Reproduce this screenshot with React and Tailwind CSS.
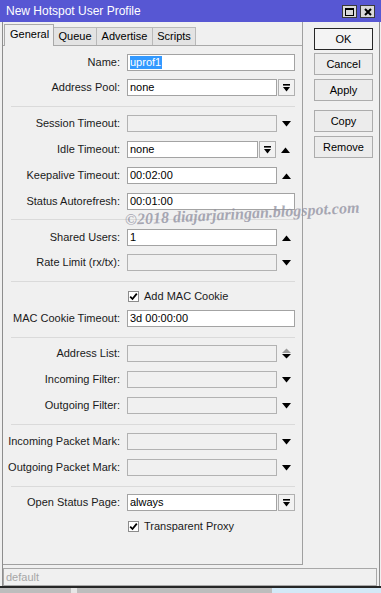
import React from 'react';

const DropIcon = () => (
  <svg width="7" height="8" viewBox="0 0 7 8">
    <rect x="0" y="0" width="7" height="1.6" fill="#000" />
    <polygon points="0,3 7,3 3.5,7.5" fill="#000" />
  </svg>
);

const Arrow = ({ dir }) => {
  if (dir === 'up')
    return (
      <svg width="9" height="6" viewBox="0 0 9 6">
        <polygon points="0,6 9,6 4.5,0.5" fill="#000" />
      </svg>
    );
  if (dir === 'down')
    return (
      <svg width="9" height="6" viewBox="0 0 9 6">
        <polygon points="0,0 9,0 4.5,5.5" fill="#000" />
      </svg>
    );
  // up + down stacked, up one disabled
  return (
    <svg width="9" height="11" viewBox="0 0 9 11">
      <polygon points="0,5 9,5 4.5,0.5" fill="#9a9a9a" />
      <polygon points="0,6 9,6 4.5,10.5" fill="#000" />
    </svg>
  );
};

const Input = ({ value, disabled, className = '' }) => (
  <div
    className={`h-[17px] border flex items-center px-[2px] text-[11px] text-black leading-none ${
      disabled ? 'bg-[#f0f0f0] border-[#b2b2b2]' : 'bg-white border-[#a3a3a3]'
    } ${className}`}
  >
    {value}
  </div>
);

const DropBtn = () => (
  <div className="ml-[1px] w-[17px] h-[17px] border border-[#b0b0b0] bg-[#f2f2f2] flex items-center justify-center">
    <DropIcon />
  </div>
);

const Row = ({ label, value, kind = 'full', arrow, disabled, mt }) => (
  <div className={`flex items-center h-[17px] ${mt}`}>
    <div className="w-[117px] text-right text-[11px] text-[#1a1a1a] whitespace-nowrap">{label}</div>
    <div className="ml-[7px] w-[168px] flex items-center">
      {kind === 'full' && <Input value={value} disabled={disabled} className="w-full" />}
      {kind === 'drop' && (
        <>
          <Input value={value} disabled={disabled} className="w-[150px]" />
          <DropBtn />
        </>
      )}
      {kind === 'arrow' && (
        <>
          <Input value={value} disabled={disabled} className="w-[150px]" />
          <div className="flex-1 flex justify-center">
            <Arrow dir={arrow} />
          </div>
        </>
      )}
      {kind === 'dropArrow' && (
        <>
          <Input value={value} disabled={disabled} className="w-[131px]" />
          <DropBtn />
          <div className="flex-1 flex justify-center">
            <Arrow dir={arrow} />
          </div>
        </>
      )}
    </div>
  </div>
);

const Sep = ({ mt }) => <div className={`ml-[8px] w-[284px] h-px bg-[#dadada] ${mt}`} />;

const Check = ({ label, mt }) => (
  <div className={`flex items-center h-[12px] ${mt}`}>
    <div className="ml-[125px] w-[11px] h-[11px] border border-[#8c8c8c] bg-white flex items-center justify-center">
      <svg width="9" height="9" viewBox="0 0 9 9">
        <path d="M1.2 4.6 L3.5 7 L7.8 1.6" stroke="#000" strokeWidth="1.8" fill="none" />
      </svg>
    </div>
    <span className="ml-[5px] text-[11px] text-[#1a1a1a]">{label}</span>
  </div>
);

const SideBtn = ({ label, mt, primary }) => (
  <div
    className={`w-[59px] h-[22px] flex items-center justify-center text-[11px] text-black border ${
      primary ? 'border-[#262626] bg-[#f4f4f4]' : 'border-[#acacac] bg-[#ececec]'
    } ${mt}`}
  >
    {label}
  </div>
);

export default function App() {
  return (
    <div className="w-[381px] h-[593px] relative overflow-hidden bg-[#f0f0f0] font-['Liberation_Sans',Arial,sans-serif]">
      {/* Title bar */}
      <div className="h-[22px] bg-[#5757d3] flex items-center pl-[6px] pr-[6px]">
        <span className="text-white text-[12px]">New Hotspot User Profile</span>
        <div className="ml-auto flex gap-[3px] mt-[1px]">
          <div className="w-[15px] h-[13px] bg-[#d9d9d9] border border-[#3a3a3a] flex items-center justify-center">
            <div className="w-[9px] h-[8px] border border-black border-t-2" />
          </div>
          <div className="w-[15px] h-[13px] bg-[#d9d9d9] border border-[#3a3a3a] flex items-center justify-center">
            <svg width="8" height="8" viewBox="0 0 8 8">
              <path d="M1 1 L7 7 M7 1 L1 7" stroke="#000" strokeWidth="2" />
            </svg>
          </div>
        </div>
      </div>

      {/* Window body */}
      <div className="ml-[2px] w-[378px] border-l border-r border-[#8d8d8d]">
        <div className="h-[543px] flex">
          {/* Tabs + panel */}
          <div className="w-[300px] h-full border-r border-b border-[#a0a0a0] flex flex-col">
            <div className="h-[24px] flex items-end border-b border-[#a9a9a9] text-[11px] text-black">
              <div className="ml-[1px] w-[50px] h-[22px] border border-b-0 border-[#a9a9a9] bg-[#f0f0f0] -mb-px flex items-center pl-[5px] pb-[2px]">
                General
              </div>
              <div className="w-[43px] h-[18px] border-t border-r border-[#b9b9b9] bg-[#e3e3e3] flex items-center justify-center">
                Queue
              </div>
              <div className="w-[56px] h-[18px] border-t border-r border-[#b9b9b9] bg-[#e3e3e3] flex items-center justify-center">
                Advertise
              </div>
              <div className="w-[43px] h-[18px] border-t border-r border-[#b9b9b9] bg-[#e3e3e3] flex items-center justify-center">
                Scripts
              </div>
            </div>

            <div className="flex flex-col">
              <Row
                label="Name:"
                mt="mt-[8px]"
                value={<span className="bg-[#3399ff] text-white h-[13px] flex items-center pr-[1px]">uprof1</span>}
              />
              <Row label="Address Pool:" value="none" kind="drop" mt="mt-[8px]" />
              <Sep mt="mt-[10px]" />
              <Row label="Session Timeout:" kind="arrow" arrow="down" disabled mt="mt-[8px]" />
              <Row label="Idle Timeout:" value="none" kind="dropArrow" arrow="up" mt="mt-[9px]" />
              <Row label="Keepalive Timeout:" value="00:02:00" kind="arrow" arrow="up" mt="mt-[9px]" />
              <Row label="Status Autorefresh:" value="00:01:00" mt="mt-[9px]" />
              <Sep mt="mt-[9px]" />
              <Row label="Shared Users:" value="1" kind="arrow" arrow="up" mt="mt-[9px]" />
              <Row label="Rate Limit (rx/tx):" kind="arrow" arrow="down" disabled mt="mt-[8px]" />
              <Sep mt="mt-[10px]" />
              <Check label="Add MAC Cookie" mt="mt-[8px]" />
              <Row label="MAC Cookie Timeout:" value="3d 00:00:00" mt="mt-[8px]" />
              <Sep mt="mt-[10px]" />
              <Row label="Address List:" kind="arrow" arrow="updown" disabled mt="mt-[7px]" />
              <Row label="Incoming Filter:" kind="arrow" arrow="down" disabled mt="mt-[9px]" />
              <Row label="Outgoing Filter:" kind="arrow" arrow="down" disabled mt="mt-[9px]" />
              <Sep mt="mt-[10px]" />
              <Row label="Incoming Packet Mark:" kind="arrow" arrow="down" disabled mt="mt-[8px]" />
              <Row label="Outgoing Packet Mark:" kind="arrow" arrow="down" disabled mt="mt-[9px]" />
              <Sep mt="mt-[10px]" />
              <Row label="Open Status Page:" value="always" kind="drop" mt="mt-[7px]" />
              <Check label="Transparent Proxy" mt="mt-[9px]" />
            </div>
          </div>

          {/* Buttons */}
          <div className="ml-[11px] flex flex-col">
            <SideBtn label="OK" primary mt="mt-[6px]" />
            <SideBtn label="Cancel" mt="mt-[3px]" />
            <SideBtn label="Apply" mt="mt-[4px]" />
            <SideBtn label="Copy" mt="mt-[9px]" />
            <SideBtn label="Remove" mt="mt-[4px]" />
          </div>
        </div>

        {/* Status bar */}
        <div className="mt-[3px] w-[374px] h-[18px] border border-[#a8a8a8] flex items-center pl-[2px] text-[11px] text-[#a6a6a6]">
          default
        </div>
      </div>

      {/* Desktop strip below window */}
      <div className="h-[7px] border-t-2 border-[#262626] flex">
        <div className="w-[272px] bg-[#bdbdbd] flex">
          <div className="ml-[71px] w-[6px] bg-[#e6e6e6]" />
        </div>
        <div className="flex-1 bg-[#d3e9f7]" />
      </div>

      {/* Watermark */}
      <div className="absolute left-[125px] top-[211px] rotate-[-3deg] origin-left whitespace-nowrap text-[16px] leading-[18px] font-bold italic font-['Liberation_Serif',serif] text-[#8e8e9e]/75 pointer-events-none">
        ©2018 diajarjaringan.blogspot.com
      </div>
    </div>
  );
}
